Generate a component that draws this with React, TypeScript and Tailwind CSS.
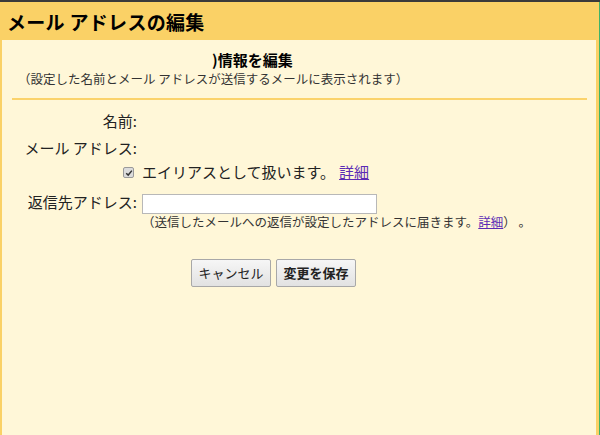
export default function App() {
  const font = { fontFamily: '"Noto Sans CJK JP", "Liberation Sans", sans-serif' };
  return (
    <div
      className="flex h-[435px] w-[600px] flex-col overflow-hidden border-t-2 border-[#3a3a3a] bg-[#fad166] text-[#222]"
      style={font}
    >
      <div className="flex flex-1 min-h-0">
        <div className="flex min-w-0 flex-1 flex-col pl-[2px] pr-[3px]">
          {/* Header */}
          <div className="flex h-[38px] shrink-0 items-center pl-[5px]">
            <h1 className="text-[19px] font-bold leading-none tracking-[0.3px] text-black">
              メール アドレスの編集
            </h1>
          </div>

          {/* Body */}
          <div className="flex-1 bg-[#fff7d8] pl-[10px] pr-[9px] pt-[10px]">
            <div className="flex h-[20px] items-center pl-[200px] text-[15px] font-bold leading-[20px] text-black">
              <span>)</span>
              <span>情報を編集</span>
            </div>
            <p className="h-[18px] pl-[6px] text-[12.5px] leading-[18px] text-[#333]">
              （設定した名前とメール アドレスが送信するメールに表示されます）
            </p>
            <div className="mt-[10px] h-[2px] bg-[#fbd36b]" />

            {/* Form */}
            <div className="mt-[8px] grid grid-cols-[125px_1fr] gap-x-[5px] text-[15px] text-[#222]">
              <div className="flex h-[27px] items-center justify-end">名前:</div>
              <div />

              <div className="flex h-[26px] items-center justify-end">メール アドレス:</div>
              <div />

              <div className="flex h-[23px] items-center justify-end pr-[3px]">
                <span className="flex h-[11px] w-[11px] items-center justify-center rounded-[2px] border border-[#9a9a9a] bg-[#dcdcdc]">
                  <svg viewBox="0 0 10 10" className="h-[8px] w-[8px]">
                    <path d="M1.5 5.2 L4 7.6 L8.6 2" fill="none" stroke="#333" strokeWidth="1.8" />
                  </svg>
                </span>
              </div>
              <div className="flex h-[23px] items-center">
                エイリアスとして扱います。
                <a href="#" className="ml-[4px] text-[#5b2bb5] underline">
                  詳細
                </a>
              </div>

              <div className="mt-[8px] flex h-[20px] items-center justify-end">返信先アドレス:</div>
              <div className="mt-[8px] h-[20px]">
                <input
                  type="text"
                  className="h-[20px] w-[235px] border border-[#b8b8b8] bg-white px-1 text-[13px] outline-none"
                />
              </div>

              <div />
              <div className="flex h-[20px] items-center text-[12.5px] text-[#333]">
                （送信したメールへの返信が設定したアドレスに届きます。
                <a href="#" className="text-[#5b2bb5] underline">
                  詳細
                </a>
                ）&nbsp;。
              </div>
            </div>

            {/* Buttons */}
            <div className="mt-[27px] flex gap-[5px] pl-[179px]">
              <button
                type="button"
                className="h-[28px] w-[80px] rounded-[2px] border border-[#a8a8a8] bg-gradient-to-b from-[#f6f6f6] to-[#e2e2e2] text-[13px] text-[#222]"
              >
                キャンセル
              </button>
              <button
                type="button"
                className="h-[28px] w-[80px] rounded-[2px] border border-[#a8a8a8] bg-gradient-to-b from-[#f6f6f6] to-[#e2e2e2] text-[13px] font-bold text-[#222]"
              >
                変更を保存
              </button>
            </div>
          </div>
        </div>
        <div className="w-px shrink-0 bg-[#3fb36a]" />
      </div>
    </div>
  );
}
